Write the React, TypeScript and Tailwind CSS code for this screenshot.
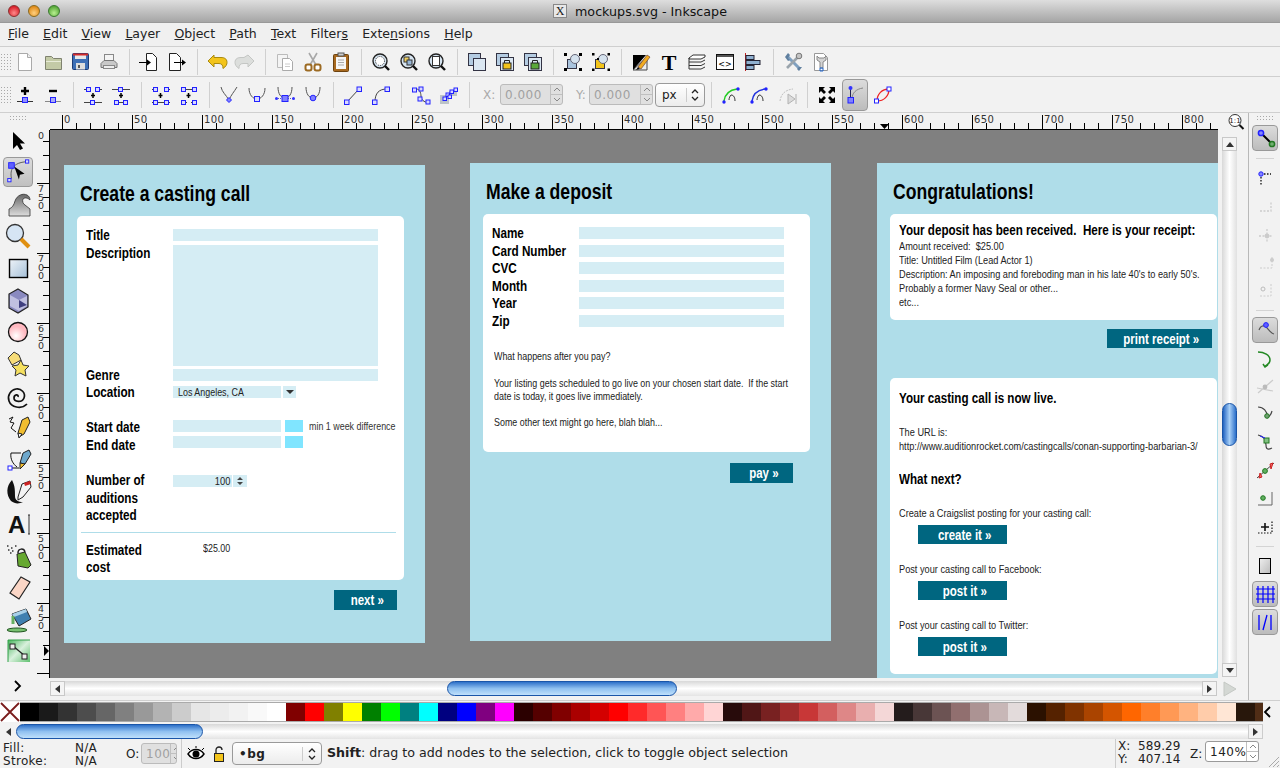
import type { ReactNode } from "react";

const N = "#2222ff";
const nodeBox = (x: number, y: number, s = 4, fill = "#d8d8ff") => (
  <rect x={x} y={y} width={s} height={s} fill={fill} stroke={N} strokeWidth="1" />
);

function Mag({ children }: { children?: ReactNode }) {
  return (
    <>
      <circle cx="11" cy="11" r="7" fill="#d6e4f0" stroke="#222" strokeWidth="1.4" />
      {children}
      <path d="M16 16l4 4" stroke="#111" strokeWidth="2.4" />
    </>
  );
}

const icons: Record<string, ReactNode> = {
  new: <><path d="M5.5 3.5h9l4 4v13h-13z" fill="#fff" stroke="#aaa" /><path d="M14.5 3.5v4h4" fill="#eee" stroke="#aaa" /></>,
  open: <><path d="M4.5 6.5h6l2 2h8v11h-16z" fill="#c3caa6" stroke="#7f826f" /><path d="M5 11.5h15" stroke="#e8ecd8" /></>,
  save: <><rect x="3.5" y="3.5" width="16" height="16" rx="1" fill="#3d6fb6" stroke="#1c3b75" /><rect x="6" y="4" width="11" height="5" fill="#e8e8e8" /><rect x="4" y="3.5" width="15" height="2" fill="#d42a2a" /><rect x="7" y="13" width="9" height="6.5" fill="#ddd" /><rect x="9" y="15" width="2" height="3" fill="#555" /></>,
  print: <><rect x="7.5" y="4.5" width="9" height="6" fill="#f4f4f4" stroke="#888" /><path d="M7 10.5h10l3 3v4H4v-4z" fill="#c9c9c9" stroke="#777" /><rect x="6.5" y="15.5" width="11" height="3" fill="#eee" stroke="#888" /></>,
  import: <><path d="M9.5 3.5h6l4 4v13h-10z" fill="#fff" stroke="#222" /><path d="M2 12.5h11" stroke="#000" /><path d="M10 9.5l4 3-4 3z" fill="#000" /></>,
  export: <><path d="M4.5 3.5h7l4 4v13h-11z" fill="#fff" stroke="#222" /><path d="M9 12.5h11" stroke="#000" /><path d="M17 9.5l4 3-4 3z" fill="#000" /></>,
  undo: <path d="M9 5l-6 6 6 6v-3.500h5c3 0 4 2 4 5 3-2 4-4 4-6 0-4-3-5-6-5H9z" fill="#f3c41a" stroke="#a98a10" />,
  redo: <path d="M15 5l6 6-6 6v-3.500h-5c-3 0-4 2-4 5-3-2-4-4-4-6 0-4 3-5 6-5h3z" fill="#dcdedc" stroke="#c4c6c4" />,
  copy: <><path d="M4.500 4.500h10v13h-10z" fill="#f4f4f4" stroke="#bbb" /><path d="M9.500 8.500h7l3 3v9h-10z" fill="#fff" stroke="#aaa" /><path d="M12 14h5M12 16.500h5" stroke="#ccc" /></>,
  cut: <><path d="M8 3l7 12M16 3L9 15" stroke="#a8a8a8" strokeWidth="1.600" /><rect x="4.500" y="14.500" width="6" height="6" rx="2" fill="#fff" stroke="#9c6a22" strokeWidth="2" /><rect x="13.500" y="14.500" width="6" height="6" rx="2" fill="#fff" stroke="#9c6a22" strokeWidth="2" /></>,
  paste: <><rect x="4.500" y="4.500" width="15" height="17" rx="1" fill="#a8691f" stroke="#6d4310" /><rect x="7" y="7" width="10" height="12" fill="#f6f6f6" /><rect x="9" y="3" width="6" height="3" fill="#ccc" stroke="#555" /><path d="M9 10h6M9 12.500h6M9 15h6" stroke="#aaa" /></>,
  zoomsel: <Mag><circle cx="11" cy="11" r="4.500" fill="#fff" stroke="#333" strokeDasharray="1 1" /></Mag>,
  zoomdraw: <Mag><rect x="7" y="7" width="5" height="5" fill="#f0d060" stroke="#333" /><rect x="10" y="10" width="5" height="5" fill="#9ab8d8" stroke="#333" /></Mag>,
  zoompage: <Mag><rect x="7.500" y="6.500" width="7" height="9" fill="#fff" stroke="#333" /></Mag>,
  dup: <><rect x="3.500" y="3.500" width="12" height="12" fill="#b4cce2" stroke="#334" /><rect x="8.500" y="8.500" width="12" height="12" fill="#dbe7f2" stroke="#334" /></>,
  clone: <><rect x="3.500" y="3.500" width="12" height="12" fill="#b4cce2" stroke="#334" /><rect x="7.500" y="7.500" width="13" height="13" fill="#dbe7f2" stroke="#334" /><rect x="10" y="13" width="8" height="6" fill="#f3c41a" stroke="#222" /><path d="M11.500 13v-2.500h5V13" fill="none" stroke="#222" /></>,
  unlink: <><rect x="3.500" y="3.500" width="12" height="12" fill="#b4cce2" stroke="#334" /><rect x="7.500" y="7.500" width="13" height="13" fill="#dbe7f2" stroke="#334" /><rect x="10" y="13" width="8" height="6" fill="#5aa83a" stroke="#222" /><path d="M11.500 13v-2.500h5V13" fill="none" stroke="#222" /></>,
  group: <><rect x="6.500" y="9.500" width="9" height="9" fill="#a9c4de" stroke="#334" /><circle cx="14" cy="9" r="4.500" fill="#d5e2ee" stroke="#667" /><path d="M3 3h3v3H3zM18 3h3v3h-3zM3 18h3v3H3zM18 18h3v3h-3z" fill="#000" /></>,
  ungroup: <><rect x="6.500" y="9.500" width="9" height="9" fill="#f3c41a" stroke="#334" /><circle cx="14" cy="9" r="4.500" fill="#d5e2ee" stroke="#667" /><path d="M3 3h2.500v2.500H3zM18.500 3H21v2.500h-2.500zM3 18.500h2.500V21H3zM18.500 18.500H21V21h-2.500zM8 8h2v2H8z" fill="#000" /></>,
  fill: <><path d="M4 5h13L4 20z" fill="#000" /><path d="M4 20h14V7z" fill="#eee" stroke="#444" /><path d="M9 17l9-12 3 2-9 12z" fill="#f2ab20" stroke="#533" strokeWidth=".6" /><path d="M9 17l-2 3 4-1z" fill="#111" /></>,
  text: <text x="12" y="20" textAnchor="middle" fontSize="22" fontWeight="700" fontFamily="'Liberation Serif',serif" fill="#000">T</text>,
  layers: <path d="M4 8l4-3h12v2l-4 2H4zM4 12h12l4-2M4 15.500h12l4-2M4 19h12l4-2M4 8v11" fill="#fff" stroke="#333" />,
  xml: <><rect x="3.500" y="4.500" width="17" height="15" fill="#fff" stroke="#111" /><rect x="4" y="5" width="16" height="2" fill="#555" /><text x="12" y="16.500" textAnchor="middle" fontSize="8" fontFamily="'DejaVu Sans',sans-serif" fill="#000">{"<>"}</text></>,
  align: <><path d="M4.500 3v18" stroke="#c02020" /><rect x="5" y="5.500" width="8" height="4" fill="#8fb0d0" stroke="#223" /><rect x="5" y="10.500" width="14" height="4" fill="#8fb0d0" stroke="#223" /><rect x="5" y="15.500" width="8" height="4" fill="#8fb0d0" stroke="#223" /></>,
  prefs: <><path d="M6 6l12 12" stroke="#7fa0c0" strokeWidth="3" /><path d="M18 6L6 18" stroke="#9aa4ac" strokeWidth="2.600" /><path d="M4 7l3-4 2 2-2 3 2 2-2 1zM18 21l3-4-3 0-2 2z" fill="#5f7f9f" /><circle cx="18" cy="6" r="2.800" fill="#c4c4c4" stroke="#777" /></>,
  docprefs: <><path d="M5.500 3.500h9l4 4v13h-13z" fill="#fff" stroke="#999" /><path d="M8 6v4l3 2v6h3v-6l3-2V6l-2 2h-5z" fill="#d4d4d4" stroke="#888" /><path d="M11 18h3v3h-3z" fill="none" stroke="#2266cc" /></>,
  addnode: <><path d="M12 4v8M8 8h8" stroke="#000" strokeWidth="2.400" /><path d="M4 18.500h16" stroke="#333" />{nodeBox(9.500, 14.500, 5, "#9090ff")}</>,
  delnode: <><path d="M8 8h8" stroke="#000" strokeWidth="2.400" /><path d="M4 18.500h16" stroke="#888" />{nodeBox(9.500, 14.500, 5, "#aaaaf5")}</>,
  join: <><path d="M3 6.500h4M17 6.500h4M3 19.500h18" stroke="#444" />{nodeBox(5.500, 4.500)}{nodeBox(14.500, 4.500)}{nodeBox(9.500, 17.500)}<path d="M12 10v5M10 12.500h4" stroke="#000" strokeWidth="1.500" /></>,
  breaknode: <><path d="M3 6.500h18M5 19.500h14" stroke="#444" />{nodeBox(9.500, 4.500)}{nodeBox(5.500, 17.500)}{nodeBox(14.500, 17.500)}<path d="M12 10v5M10 12.500h4" stroke="#000" strokeWidth="1.500" /></>,
  joinseg: <><path d="M3 6.500h3M18 6.500h3M3 19.500h18" stroke="#444" />{nodeBox(4.500, 4.500)}{nodeBox(15.500, 4.500)}{nodeBox(4.500, 17.500)}{nodeBox(15.500, 17.500)}<path d="M11.500 10v5M9.500 12.500h4" stroke="#000" strokeWidth="1.500" /></>,
  delseg: <><path d="M4 6.500h16M4 19.500h6M14 19.500h6" stroke="#444" />{nodeBox(4.500, 4.500)}{nodeBox(15.500, 4.500)}{nodeBox(4.500, 17.500)}{nodeBox(15.500, 17.500)}<path d="M11.500 10v5M9.500 12.500h4" stroke="#000" strokeWidth="1.500" /></>,
  cusp: <><path d="M4 4c1 5 5 8 8 13 2-5 5-8 8-13" fill="none" stroke="#555" /><path d="M9.500 17l2.500-2.500 2.500 2.500-2.500 2.500z" fill="#8080ff" stroke={N} /></>,
  smooth: <><path d="M4 5c0 7 4 11 8 11s8-4 8-11" fill="none" stroke="#555" />{nodeBox(9.500, 13.500, 5)}</>,
  sym: <><path d="M5 4c0 7 3 11 7 11s7-4 7-11" fill="none" stroke="#555" /><path d="M3 15.500h18" stroke="#55c" strokeDasharray="1 1" />{nodeBox(9, 12.500, 6, "#8080ff")}<circle cx="3.500" cy="15.500" r="1.500" fill="#33f" /><circle cx="20.500" cy="15.500" r="1.500" fill="#33f" /></>,
  auto: <><path d="M5 4c0 7 3 11 7 11s7-4 7-11" fill="none" stroke="#555" /><circle cx="12" cy="15" r="2.800" fill="#8080ff" stroke={N} /></>,
  toline: <><path d="M6 19L18 6" stroke="#444" />{nodeBox(3.500, 17, 4.500)}{nodeBox(16, 4, 4.500)}</>,
  tocurve: <><path d="M6 19c0-9 4-13 12-13" fill="none" stroke="#444" />{nodeBox(3.500, 17, 4.500)}{nodeBox(16, 4, 4.500)}</>,
  objpath: <><path d="M6 7c4-3 6 3 6 6s3 7 7 6" fill="none" stroke="#444" />{nodeBox(3.500, 5, 4)}{nodeBox(10, 4, 4)}{nodeBox(9, 14, 4)}{nodeBox(17, 17, 4)}</>,
  strokepath: <><path d="M3 12h9v9H3zM12 8h8v5h-8z" fill="#bcc3c8" />{nodeBox(6, 14, 3.500)}{nodeBox(9, 10, 3.500)}{nodeBox(13, 7, 3.500)}{nodeBox(17, 5, 3.500)}{nodeBox(11, 12, 3.500)}</>,
  nextobj: <><path d="M5 18c1-7 5-11 13-12" fill="none" stroke="#22cc22" strokeWidth="1.500" /><circle cx="5" cy="19" r="1.700" fill={N} /><circle cx="19" cy="6" r="1.700" fill={N} /><path d="M12 12c3 0 4 3 4 6M12 12c-1 1-2 3-2 5" fill="none" stroke="#333" /></>,
  prevobj: <><path d="M5 18c1-7 5-11 13-12" fill="none" stroke="#2233dd" strokeWidth="1.500" /><circle cx="5" cy="19" r="1.700" fill={N} /><circle cx="19" cy="6" r="1.700" fill={N} /><path d="M12 12c3 0 4 3 4 6M12 12c-1 1-2 3-2 5" fill="none" stroke="#333" /></>,
  lpe: <g opacity=".4"><path d="M5 18c1-7 5-11 13-12" fill="none" stroke="#777" strokeDasharray="2 1" /><path d="M13 11l7 5-7 5z" fill="#bbb" stroke="#555" /><path d="M21 11v10" stroke="#555" /></g>,
  transform: <path d="M4 4h6L8 6l3 3-2 2-3-3-2 2zM20 4v6l-2-2-3 3-2-2 3-3-2-2zM4 20v-6l2 2 3-3 2 2-3 3 2 2zM20 20h-6l2-2-3-3 2-2 3 3 2-2z" fill="#000" />,
  handles: <><path d="M9 16C9 10 13 6 20 5" fill="none" stroke="#888" /><path d="M7.500 5v11" stroke="#225" />{nodeBox(5, 14.500, 5.500, "#8080ff")}<circle cx="7.500" cy="5" r="2" fill="#33f" /></>,
  outline: <><path d="M6 18C6 11 11 6 18 6 18 13 13 18 6 18z" fill="none" stroke="#ee2222" strokeWidth="1.300" />{nodeBox(3.500, 16, 4, "#fff")}{nodeBox(16, 4, 4, "#fff")}</>,
  selector: <path d="M10 7v17l4-4 3 5 3-1.500-3-5h5z" fill="#000" />,
  node: <><path d="M8 22C6 12 10 5 24 4" fill="none" stroke="#555" />{nodeBox(5, 5, 6, "#6060ff")}{nodeBox(23, 2, 3.500)}{nodeBox(4, 22, 3.500)}<path d="M11 9l11 8-5 1-1 5z" fill="#000" /></>,
  tweak: <><defs><linearGradient id="twg" x1="0" y1="0" x2="0" y2="1"><stop offset="0" stopColor="#666" /><stop offset="1" stopColor="#ddd" /></linearGradient></defs><path d="M6 27V20c3-1 5-4 6-8 2-6 8-8 12-6 2 1 3 3 3 5-2-2-5-3-7-1-1 2 0 5 2 6l5 4v7z" fill="url(#twg)" stroke="#333" strokeWidth=".8" /></>,
  zoom: <><circle cx="12" cy="12" r="8.500" fill="#d6e5f4" stroke="#333" strokeWidth="1.300" /><path d="M18 18l8 8" stroke="#e09010" strokeWidth="4" /></>,
  rect: <><defs><linearGradient id="rectg" x1="0" y1="0" x2="1" y2="1"><stop offset="0" stopColor="#eef3f8" /><stop offset="1" stopColor="#a5c0d8" /></linearGradient></defs><rect x="6.500" y="6.500" width="18" height="18" fill="url(#rectg)" stroke="#000" strokeWidth="1.400" /></>,
  box3d: <><path d="M15 4l10 6v12l-10 6-9-5V9z" fill="#8a8ac0" stroke="#222" strokeWidth="1.200" /><path d="M7 10l9 5 8-4v10l-8 5-9-5z" fill="#c0c0e0" /><path d="M16 15v8l8-3z" fill="#3f3f80" /></>,
  circle: <><defs><radialGradient id="circg" cx=".4" cy=".7"><stop offset="0" stopColor="#ffffff" /><stop offset="1" stopColor="#ffb8c0" /></radialGradient></defs><circle cx="15" cy="15" r="9.500" fill="url(#circg)" stroke="#111" strokeWidth="1.300" /></>,
  star: <><path d="M11 3l5 3 2 5-9 5-4-7z" fill="#f6dc78" stroke="#333" /><path d="M18 11l2 5 6 1-4 4 1 6-6-3-5 3 1-6-4-4 6-1z" fill="#f5e060" stroke="#333" /></>,
  spiral: <path d="M15 16c1-3-4-3-4 1s8 5 10 0-3-10-8-9-9 6-7 12 12 9 18 3" fill="none" stroke="#111" strokeWidth="1.700" />,
  pencil: <><path d="M6 6l4-2-3 5 4 1-3 5 5 4" fill="none" stroke="#111" /><path d="M15 20l4-13 6-3 2 5-6 12-5 3z" fill="#f0bd30" stroke="#222" /><path d="M15 20l4 1-3 4z" fill="#fff" stroke="#222" /></>,
  pen: <><path d="M8 8h10M8 8c-1 6 2 11 6 14M7 23h9" fill="none" stroke="#111" />{nodeBox(5, 21, 4, "#fff")}<path d="M17 18l3-10 6-3 2 4-6 10z" fill="#6ea8cc" stroke="#222" /><path d="M17 18l5 1-5 5z" fill="#f0bd30" stroke="#222" /></>,
  calligraphy: <><path d="M9 3C3 9 3 18 8 24c4 3 8 3 12 1-5 0-8-2-8-6 0-6 0-10-3-16z" fill="#111" /><path d="M15 20l4-13 8-3 1 6-8 10-5 3z" fill="#f4f4f4" stroke="#222" /><path d="M21 6l6-2 1 3-6 2z" fill="#cc2222" /></>,
  texttool: <><text x="5" y="24" fontSize="24" fontWeight="700" fontFamily="'Liberation Sans',sans-serif" fill="#111">A</text><path d="M25 6h2M25 25h2M26 6v19" stroke="#333" /></>,
  spray: <><path d="M4 5h2M8 7h2M5 9h2M9 10h2M12 5h2M7 12h2" stroke="#333" strokeWidth="1.400" strokeDasharray="1.500 1" /><path d="M14 13l8-2 6 13-3 3-10-2z" fill="#66a830" stroke="#222" /><path d="M15 12c0-5 6-5 7-1" fill="none" stroke="#222" strokeWidth="1.500" /></>,
  eraser: <path d="M7 20L18 4l9 5-11 17z" fill="#fbd6c6" stroke="#222" strokeWidth="1.200" />,
  bucket: <><path d="M9 9l14-5 5 10-12 7z" fill="#3f80b0" stroke="#222" /><path d="M9 9l14-5 1 3-13 5z" fill="#a8d0e8" /><path d="M10 11v8" stroke="#66b060" strokeWidth="3" /><ellipse cx="14" cy="25" rx="10" ry="2" fill="#78c070" stroke="#225522" /></>,
  connector: <><defs><linearGradient id="cng" x1="0" y1="0" x2="1" y2="1"><stop offset="0" stopColor="#45b45a" /><stop offset=".5" stopColor="#d8f0dc" /><stop offset="1" stopColor="#60c070" /></linearGradient></defs><rect x="5" y="3" width="22" height="22" fill="url(#cng)" /><path d="M5 25V3h22" fill="none" stroke="#30a048" /><path d="M10 9l12 10" stroke="#222" strokeWidth="1.300" /><rect x="7" y="7" width="5" height="5" fill="#eee" stroke="#222" /><rect x="19" y="17" width="5" height="5" fill="#eee" stroke="#222" /></>,
  snap: <><path d="M10 9l8 8" stroke="#000" strokeWidth="2" /><circle cx="8" cy="7" r="2.600" fill="#8888ff" stroke={N} strokeWidth="1.500" /><circle cx="19" cy="18" r="2.600" fill="#70b070" stroke="#227722" strokeWidth="1.500" /></>,
  snapbbox: <><path d="M8 8h10M8 8v11" stroke="#111" strokeDasharray="1.500 1.500" strokeWidth="1.300" /><circle cx="8" cy="8" r="2.200" fill="#8888ff" stroke={N} /></>,
  bb1: <path d="M7 17h11V7" fill="none" stroke="#ccc" strokeWidth="1.300" strokeDasharray="2 1.500" />,
  bb2: <><path d="M6 14h13M14 7v13" stroke="#ccc" strokeWidth="1.300" strokeDasharray="2 1.500" /><circle cx="14" cy="14" r="2.400" fill="#ccc" /></>,
  bb3: <><path d="M7 18h12V6" fill="none" stroke="#ccc" strokeDasharray="2 1.500" /><circle cx="19" cy="10" r="2" fill="#ccc" /></>,
  bb4: <><path d="M7 18h11V6" fill="none" stroke="#ccc" strokeDasharray="2 1.500" /><circle cx="10" cy="11" r="2" fill="none" stroke="#bbb" /></>,
  snapnode: <><path d="M6 12c2-5 4-4 6-4 3 2 5 7 9 8" fill="none" stroke="#555" strokeWidth="1.200" /><circle cx="13" cy="7" r="2.400" fill="#6060ff" stroke={N} /></>,
  snappath: <><path d="M5 6c6 0 12 3 12 8s-4 4-5 7" fill="none" stroke="#228822" strokeWidth="1.500" /><path d="M10 18l2 3 3-2" fill="none" stroke="#228822" strokeWidth="1.500" /></>,
  snapint: <><path d="M5 19L20 6M4 14l16 3" stroke="#ccc" strokeWidth="1.200" /><circle cx="12" cy="13" r="2.400" fill="#bbb" /></>,
  snapcusp: <><path d="M5 5c5 0 10 4 9 11M14 16c2-1 4-3 5-7" fill="none" stroke="#444" strokeWidth="1.200" /><circle cx="14" cy="14" r="2.300" fill="#70a070" stroke="#227722" /></>,
  snapsmooth: <><path d="M5 5c5 1 8 4 8 10s4 4 6 3" fill="none" stroke="#444" strokeWidth="1.200" /><rect x="11" y="8" width="5" height="5" fill="#80c080" stroke="#227722" /><path d="M7 6l5 2" stroke={N} /></>,
  snapmid: <><path d="M4 20L21 5" stroke="#444" /><path d="M7 15l-1 5 3-1zM17 6l1 5 2-6z" fill="#ee6666" stroke="#cc2222" /><circle cx="12" cy="13" r="2.400" fill="#60b060" stroke="#227722" /></>,
  snapcenter: <><path d="M5 19h14V6" fill="none" stroke="#666" /><circle cx="10" cy="12" r="2.300" fill="#60b060" stroke="#227722" /></>,
  snaprot: <><path d="M12 9v8M8 13h8" stroke="#111" strokeWidth="1.600" /><path d="M5 19h14V6" fill="none" stroke="#111" strokeDasharray="1.500 1.500" strokeWidth="1.200" /></>,
  snappage: <><defs><linearGradient id="pgg" x1="0" y1="0" x2="1" y2="1"><stop offset="0" stopColor="#eee" /><stop offset="1" stopColor="#bbb" /></linearGradient></defs><rect x="6.500" y="4.500" width="11" height="15" fill="url(#pgg)" stroke="#000" /></>,
  snapgrid: <path d="M5 4v17M10 4v17M15 4v17M20 4v17M3 7h19M3 12h19M3 17h19" stroke="#0000ff" strokeWidth="1.200" />,
  snapguide: <path d="M6 5v15M18 5v15M10 20l4-15" stroke="#0000ff" strokeWidth="1.300" />,
};

function Ic({ name, size = 24 }: { name: string; size?: number }) {
  const big = size === 30;
  return (
    <svg width={size} height={size} viewBox={big ? "0 0 30 30" : "0 0 24 24"} fill="none">
      {icons[name]}
    </svg>
  );
}

function Grip({ className }: { className: string }) {
  return <div className={`${className} bg-[radial-gradient(#a8a8a8_0.7px,transparent_0.8px)] bg-[length:3px_3px]`} />;
}

function Row({ items, active = [] }: { items: string[]; active?: string[] }) {
  return (
    <>
      {items.map((it, i) =>
        it === "|" ? (
          <div key={i} className="w-[12px] h-[26px] flex justify-center shrink-0">
            <div className="w-px bg-[#d0d0d0]" />
          </div>
        ) : (
          <div key={i} className="w-[28px] h-full flex items-center justify-center shrink-0">
            <div className={active.includes(it) ? "w-[26px] h-[32px] flex items-center justify-center rounded-[4px] border border-[#999] bg-gradient-to-b from-[#dcdcdc] to-[#bcbcbc]" : "contents"}>
              <Ic name={it} />
            </div>
          </div>
        )
      )}
    </>
  );
}

function Field({ value, disabled = true, w }: { value: string; disabled?: boolean; w: string }) {
  return (
    <div className={`${w} h-[21px] flex items-center justify-between rounded-[3px] border ${disabled ? "border-[#bbb] bg-[#e0e0e0] text-[#a0a0a0]" : "border-[#9a9a9a] bg-white text-[#222]"} text-[12px] tracking-[.5px] overflow-hidden`}>
      <span className="pl-[4px]">{value}</span>
      <div className="w-[12px] h-full shrink-0 flex flex-col border-l border-[#c0c0c0] text-[#888]">
        <div className="flex-1 flex items-center justify-center border-b border-[#c0c0c0]"><svg width="8" height="5"><path d="M1 4l3-3 3 3" fill="none" stroke="currentColor" /></svg></div>
        <div className="flex-1 flex items-center justify-center"><svg width="8" height="5"><path d="M1 1l3 3 3-3" fill="none" stroke="currentColor" /></svg></div>
      </div>
    </div>
  );
}

function UpDown() {
  return (
    <svg width="10" height="14" className="text-[#222]"><path d="M2 5l3-3 3 3M2 9l3 3 3-3" fill="none" stroke="currentColor" strokeWidth="1.300" /></svg>
  );
}

function HRuler() {
  const majors = Array.from({ length: 17 }, (_, i) => i);
  const minors = Array.from({ length: 84 }, (_, i) => i * 14);
  return (
    <svg width="1168" height="17" className="block">
      {minors.map((x) => <path key={x} d={`M${x + 12 - 14 + 0.5} 10v6`} stroke="#000" />)}
      {majors.map((i) => (
        <g key={i}>
          <path d={`M${12 + i * 70 + 0.5} 2v14`} stroke="#000" />
          <text x={12 + i * 70 + 2} y="10" fontSize="10" letterSpacing=".4" fontFamily="'DejaVu Sans',sans-serif" fill="#333">{i * 50}</text>
        </g>
      ))}
      <path d="M0 16.500h1168" stroke="#000" />
      <path d="M830 11h9l-4.500 5z" fill="#000" />
    </svg>
  );
}

function VRuler() {
  const labels = [800, 750, 700, 650, 600, 550, 500, 450, 400];
  const minors = Array.from({ length: 40 }, (_, i) => i * 14);
  return (
    <svg width="14" height="548" className="block">
      {minors.map((y) => <path key={y} d={`M7 ${y + 11.500}h7`} stroke="#000" />)}
      {labels.map((v, i) => {
        const y = 53 + (i - 1) * 70;
        return (
          <g key={v}>
            <path d={`M1 ${y + 0.5}h13`} stroke="#000" />
            {String(v).split("").map((d, j) =>
              y + 9 + j * 8.5 < 8 || v === 400 ? null : (
                <text key={j} x="2" y={y + 9 + j * 8.500} fontSize="9.500" fontFamily="'DejaVu Sans',sans-serif" fill="#333">{d}</text>
              )
            )}
          </g>
        );
      })}
      <path d="M13.500 0v548" stroke="#000" />
      <path d="M8 516v10l5-5z" fill="#000" />
    </svg>
  );
}

const thumbV = "bg-gradient-to-r from-[#1f62c0] via-[#a7cff6] to-[#2a6fc9] border border-[#1a55a8] rounded-full";
const thumbH = "bg-gradient-to-b from-[#2c70c8] via-[#8fc0f0] to-[#bfe0fb] border border-[#1a55a8] rounded-full";
const troughH = "bg-gradient-to-b from-[#d8d8d8] via-white to-[#e4e4e4]";
const troughV = "bg-gradient-to-r from-[#d8d8d8] via-white to-[#e0e0e0]";

function HArrow({ dir }: { dir: "l" | "r" }) {
  return (
    <div className="w-[15px] h-full flex items-center justify-center bg-[#f4f4f4] border border-[#c8c8c8] shrink-0">
      <svg width="7" height="8"><path d={dir === "l" ? "M6 0v8L1 4z" : "M1 0v8l5-4z"} fill="#333" /></svg>
    </div>
  );
}

function VArrow({ dir }: { dir: "u" | "d" }) {
  return (
    <div className="h-[14px] flex items-center justify-center bg-[#f4f4f4] border border-[#c8c8c8] shrink-0">
      <svg width="8" height="7"><path d={dir === "u" ? "M0 6h8L4 1z" : "M0 1h8L4 6z"} fill="#333" /></svg>
    </div>
  );
}

// the mockup text is an Arial Narrow look: no narrow face is installed, so squeeze Liberation Sans
const mock = "font-['Liberation_Sans',sans-serif]";

function Page({ title, className, children }: { title: string; className: string; children: ReactNode }) {
  return (
    <div className={`absolute bg-[#afdde9] ${mock} ${className}`}>
      <div className="pl-[16px] pt-[15px] h-[51px] text-[22px] leading-[28px] font-bold text-black">
        <span className="inline-block origin-left scale-x-[.8] whitespace-nowrap">{title}</span>
      </div>
      {children}
    </div>
  );
}

function Card({ className, children }: { className: string; children: ReactNode }) {
  return <div className={`ml-[13px] w-[327px] bg-white rounded-[5px] ${className}`}>{children}</div>;
}

function Cta({ label, className }: { label: string; className: string }) {
  return (
    <div className={`flex items-center justify-center pl-[4px] bg-[#006680] text-white font-bold text-[14px] leading-none ${className}`}>
      <span className="inline-block scale-x-[.82] whitespace-nowrap">{label}</span>
    </div>
  );
}

function Label({ children }: { children: ReactNode }) {
  return (
    <div className="w-[87px] shrink-0 font-bold text-[15px] leading-[17.500px] text-black">
      <span className="inline-block origin-left scale-x-[.78] whitespace-nowrap">{children}</span>
    </div>
  );
}

function Input({ className }: { className: string }) {
  return <div className={`bg-[#d5edf4] h-[12px] ${className}`} />;
}

const small = "text-[11.500px] leading-[14px] text-[#222] origin-left scale-x-[.775] whitespace-pre";
const wide = "text-[11.500px] leading-[14px] text-[#222] origin-left scale-x-[.8] whitespace-pre";
const heading = "font-bold text-[15px] leading-[18px] text-black origin-left scale-x-[.775] whitespace-pre";
const tiny = "inline-block origin-left scale-x-[.81] whitespace-nowrap";

const palette = [
  "bg-[#000000]", "bg-[#1a1a1a]", "bg-[#333333]", "bg-[#4d4d4d]", "bg-[#666666]", "bg-[#808080]", "bg-[#999999]", "bg-[#b3b3b3]", "bg-[#cccccc]", "bg-[#e6e6e6]", "bg-[#ececec]", "bg-[#f2f2f2]", "bg-[#f9f9f9]", "bg-[#ffffff]",
  "bg-[#800000]", "bg-[#ff0000]", "bg-[#808000]", "bg-[#ffff00]", "bg-[#008000]", "bg-[#00ff00]", "bg-[#008080]", "bg-[#00ffff]", "bg-[#000080]", "bg-[#0000ff]", "bg-[#800080]", "bg-[#ff00ff]",
  "bg-[#2b0000]", "bg-[#550000]", "bg-[#800000]", "bg-[#aa0000]", "bg-[#d40000]", "bg-[#ff0000]", "bg-[#ff2a2a]", "bg-[#ff5555]", "bg-[#ff8080]", "bg-[#ffaaaa]", "bg-[#ffd5d5]",
  "bg-[#280b0b]", "bg-[#501616]", "bg-[#782121]", "bg-[#a02c2c]", "bg-[#c83737]", "bg-[#d35f5f]", "bg-[#de8787]", "bg-[#e9afaf]", "bg-[#f4d7d7]",
  "bg-[#241c1c]", "bg-[#483737]", "bg-[#6c5353]", "bg-[#916f6f]", "bg-[#ac9393]", "bg-[#c8b7b7]", "bg-[#e3dbdb]",
  "bg-[#2b1100]", "bg-[#552200]", "bg-[#803300]", "bg-[#aa4400]", "bg-[#d45500]", "bg-[#ff6600]", "bg-[#ff7f2a]", "bg-[#ff9955]", "bg-[#ffb380]", "bg-[#ffccaa]", "bg-[#ffe6d5]",
  "bg-[#28170b]",
];

const menu: [string, string, string][] = [
  ["", "F", "ile"], ["", "E", "dit"], ["", "V", "iew"], ["", "L", "ayer"], ["", "O", "bject"], ["", "P", "ath"], ["", "T", "ext"], ["Filter", "s", ""], ["Exte", "n", "sions"], ["", "H", "elp"],
];

const top1 = ["new", "open", "save", "print", "|", "import", "export", "|", "undo", "redo", "|", "copy", "cut", "paste", "|", "zoomsel", "zoomdraw", "zoompage", "|", "dup", "clone", "unlink", "|", "group", "ungroup", "|", "fill", "text", "layers", "xml", "align", "|", "prefs", "docprefs"];
const top2a = ["addnode", "delnode", "|", "join", "breaknode", "|", "joinseg", "delseg", "|", "cusp", "smooth", "sym", "auto", "|", "toline", "tocurve", "|", "objpath", "strokepath", "|"];
const top2b = ["|", "nextobj", "prevobj", "lpe", "|", "transform", "handles", "outline"];
const tools = ["selector", "node", "tweak", "zoom", "rect", "box3d", "circle", "star", "spiral", "pencil", "pen", "calligraphy", "texttool", "spray", "eraser", "bucket", "connector"];
const snaps: (string | string[])[] = [["snap"], "|", ["snapbbox", "bb1", "bb2", "bb3", "bb4"], "|", ["snapnode", "snappath", "snapint", "snapcusp", "snapsmooth", "snapmid", "snapcenter", "snaprot"], "|", ["snappage", "snapgrid", "snapguide"]];
const snapActive = ["snap", "snapnode", "snapgrid", "snapguide"];

export default function App() {
  return (
    <div className="w-[1280px] h-[768px] flex flex-col overflow-hidden bg-[#f2f2f2] text-[#1a1a1a] font-['DejaVu_Sans',sans-serif]">
      {/* Title bar */}
      <div className="relative h-[23px] shrink-0 flex items-center justify-center gap-[8px] bg-gradient-to-b from-[#dedede] to-[#a6a6a6] border-b border-[#999]">
        <div className="absolute left-[8px] top-[5px] flex gap-[8px]">
          <div className="w-[12px] h-[12px] rounded-full border border-[#8a3030] bg-[radial-gradient(circle_at_50%_70%,#ff8a8a,#d81f2a_75%)]" />
          <div className="w-[12px] h-[12px] rounded-full border border-[#8a6a20] bg-[radial-gradient(circle_at_50%_70%,#ffd080,#e08a18_75%)]" />
          <div className="w-[12px] h-[12px] rounded-full border border-[#3a7a30] bg-[radial-gradient(circle_at_50%_70%,#b8f090,#58a838_75%)]" />
        </div>
        <div className="w-[14px] h-[14px] flex items-center justify-center bg-[#e8e8e8] border border-[#888] text-[12px] leading-none font-['Liberation_Serif',serif]">X</div>
        <span className="text-[12.700px] text-[#111] pt-px">mockups.svg - Inkscape</span>
      </div>

      {/* Menu */}
      <div className="h-[24px] shrink-0 flex items-center pl-[8px] gap-[14.200px] border-b border-[#cfcfcf] bg-[#f0f0f0] text-[12.500px] text-[#222]">
        {menu.map(([a, u, b]) => (
          <span key={a + u + b}>{a}<span className="underline">{u}</span>{b}</span>
        ))}
      </div>

      {/* Commands bar */}
      <div className="h-[30px] shrink-0 flex items-center border-b border-[#cfcfcf]">
        <Grip className="w-[11px] h-[18px] shrink-0" />
        <Row items={top1} />
      </div>

      {/* Tool controls */}
      <div className="h-[36px] shrink-0 flex items-center border-b border-[#cfcfcf] text-[12px]">
        <Grip className="w-[11px] h-[18px] shrink-0" />
        <Row items={top2a} />
        <span className="w-[25px] pl-[8px] text-[#aaa] shrink-0">X:</span>
        <Field value="0.000" w="w-[63px]" />
        <span className="w-[26px] pl-[13px] text-[#aaa] shrink-0">Y:</span>
        <Field value="0.000" w="w-[64px]" />
        <div className="ml-[2px] w-[50px] h-[24px] shrink-0 flex items-center justify-between pl-[6px] pr-[4px] rounded-[4px] border border-[#9a9a9a] bg-gradient-to-b from-white to-[#ececec]">
          <span>px</span>
          <div className="pl-[3px] border-l border-[#ccc] flex"><UpDown /></div>
        </div>
        <Row items={top2b} active={["handles"]} />
      </div>

      {/* Middle */}
      <div className="h-[587px] shrink-0 flex">
        <div className="w-[36px] shrink-0 flex flex-col items-center">
          <Grip className="w-[18px] h-[6px] mt-[2px] mb-[3px]" />
          {tools.map((t) => (
            <div key={t} className="h-[32px] flex items-center justify-center">
              <div className={t === "node" ? "w-[30px] h-[30px] flex items-center justify-center rounded-[4px] border border-[#999] bg-gradient-to-b from-[#dcdcdc] to-[#c0c0c0]" : "contents"}>
                <Ic name={t} size={30} />
              </div>
            </div>
          ))}
          <svg width="12" height="14" className="mt-[11px]"><path d="M3 2l5 5-5 5" fill="none" stroke="#000" strokeWidth="1.800" /></svg>
        </div>

        <div className="w-[1212px] shrink-0 flex flex-col">
          <div className="h-[17px] flex">
            <div className="w-[14px] shrink-0" />
            <HRuler />
            <div className="w-[30px] flex items-center justify-center pl-[6px]">
              <svg width="18" height="17" viewBox="0 0 18 17"><circle cx="8" cy="7.500" r="6" fill="#fff" stroke="#333" /><text x="8" y="10" textAnchor="middle" fontSize="7" fill="#111" fontFamily="'DejaVu Sans',sans-serif">1:1</text><path d="M12.500 12l4 4" stroke="#111" strokeWidth="2" /></svg>
            </div>
          </div>

          <div className="h-[548px] flex">
            <VRuler />
            <div className="relative w-[1168px] h-[548px] bg-[#808080] overflow-hidden">
              <Page title="Create a casting call" className="left-[14px] top-[35px] w-[361px] h-[478px]">
                <Card className="h-[364px] pl-[9px] pt-[10px]">
                  <div className="flex h-[18px]"><Label>Title</Label><Input className="w-[205px] mt-[3px]" /></div>
                  <div className="flex h-[122px]"><Label>Description</Label><Input className="w-[205px] !h-[121px] mt-[1px]" /></div>
                  <div className="flex h-[17px]"><Label>Genre</Label><Input className="w-[205px] mt-[3px]" /></div>
                  <div className="flex h-[18px]">
                    <Label>Location</Label>
                    <div className="flex gap-[2px] mt-[3px]">
                      <div className="w-[108px] h-[12px] bg-[#d5edf4] pl-[5px] text-[11px] leading-[12px] text-[#222]"><span className={tiny}>Los Angeles, CA</span></div>
                      <div className="w-[13px] h-[12px] bg-[#d5edf4] flex items-center justify-center"><svg width="8" height="4"><path d="M0 0h8L4 4z" fill="#333" /></svg></div>
                    </div>
                  </div>
                  <div className="flex h-[18px] mt-[17px]">
                    <Label>Start date</Label>
                    <div className="flex gap-[4px] mt-[2px]">
                      <Input className="w-[108px] shrink-0" />
                      <div className="w-[18px] h-[12px] bg-[#80e5ff] shrink-0" />
                      <span className="ml-[2px] w-[88px] shrink-0 text-[11px] leading-[12px] text-[#333]"><span className={tiny}>min 1 week difference</span></span>
                    </div>
                  </div>
                  <div className="flex h-[18px]">
                    <Label>End date</Label>
                    <div className="flex gap-[4px]"><Input className="w-[108px]" /><div className="w-[18px] h-[12px] bg-[#80e5ff]" /></div>
                  </div>
                  <div className="flex mt-[17px]">
                    <Label>Number of<br />auditions<br />accepted</Label>
                    <div className="flex gap-px mt-[4px] h-[12px]">
                      <div className="w-[59px] h-[12px] bg-[#d5edf4] pr-[2px] text-right text-[11px] leading-[12px] text-[#222]"><span className="inline-block origin-right scale-x-[.85]">100</span></div>
                      <div className="w-[14px] h-[12px] bg-[#d5edf4] flex items-center justify-center"><svg width="8" height="10"><path d="M1 4l3-3 3 3zM1 6l3 3 3-3z" fill="#444" /></svg></div>
                    </div>
                  </div>
                  <div className="h-px w-[315px] -ml-[5px] mt-[8px] bg-[#afdde9]" />
                  <div className="flex mt-[8px]">
                    <Label>Estimated<br />cost</Label>
                    <span className="ml-[30px] text-[11px] leading-[14px] text-[#222]"><span className={tiny}>$25.00</span></span>
                  </div>
                </Card>
                <Cta label="next »" className="ml-[270px] mt-[10px] w-[63px] h-[20px]" />
              </Page>

              <Page title="Make a deposit" className="left-[420px] top-[33px] w-[361px] h-[478px]">
                <Card className="h-[238px] pl-[9px] pt-[10px]">
                  {["Name", "Card Number", "CVC", "Month", "Year", "Zip"].map((l) => (
                    <div key={l} className="flex h-[17.500px]"><Label>{l}</Label><Input className="w-[205px] mt-[3px]" /></div>
                  ))}
                  <div className={`${small} ml-[2px] mt-[20px]`}>What happens after you pay?</div>
                  <div className={`${small} ml-[2px] mt-[14px] !leading-[13px]`}>Your listing gets scheduled to go live on your chosen start date.  If the start{"\n"}date is today, it goes live immediately.</div>
                  <div className={`${small} ml-[2px] mt-[12px]`}>Some other text might go here, blah blah...</div>
                </Card>
                <Cta label="pay »" className="ml-[260px] mt-[11px] w-[63px] h-[20px]" />
              </Page>

              <Page title="Congratulations!" className="left-[827px] top-[33px] w-[341px] h-[520px]">
                <Card className="h-[106px] pl-[9px] pt-[7px]">
                  <div className={heading}>Your deposit has been received.  Here is your receipt:</div>
                  <div className={wide}>Amount received:  $25.00{"\n"}Title: Untitled Film (Lead Actor 1){"\n"}Description: An imposing and foreboding man in his late 40's to early 50's.{"\n"}Probably a former Navy Seal or other...{"\n"}etc...</div>
                </Card>
                <Cta label="print receipt »" className="ml-[230px] mt-[9px] w-[105px] h-[19px]" />
                <Card className="h-[296px] mt-[30px] pl-[9px] pt-[11px]">
                  <div className={heading}>Your casting call is now live.</div>
                  <div className={`${wide} mt-[18px]`}>The URL is:{"\n"}http://www.auditionrocket.com/castingcalls/conan-supporting-barbarian-3/</div>
                  <div className={`${heading} mt-[17px]`}>What next?</div>
                  <div className={`${wide} mt-[18px]`}>Create a Craigslist posting for your casting call:</div>
                  <Cta label="create it »" className="ml-[19px] mt-[5px] w-[89px] h-[19px]" />
                  <div className={`${wide} mt-[18px]`}>Post your casting call to Facebook:</div>
                  <Cta label="post it »" className="ml-[19px] mt-[5px] w-[89px] h-[19px]" />
                  <div className={`${wide} mt-[18px]`}>Post your casting call to Twitter:</div>
                  <Cta label="post it »" className="ml-[19px] mt-[5px] w-[89px] h-[19px]" />
                </Card>
              </Page>
            </div>
            <div className="w-[30px] pl-[4px] pt-[7px] pb-px flex">
              <div className="w-[15px] flex flex-col">
                <VArrow dir="u" />
                <div className={`flex-1 flex flex-col ${troughV}`}>
                  <div className="h-[252px]" />
                  <div className={`h-[43px] ${thumbV}`} />
                </div>
                <VArrow dir="d" />
              </div>
            </div>
          </div>

          <div className="h-[15px] mt-[3px] flex">
            <div className="w-[14px] shrink-0" />
            <HArrow dir="l" />
            <div className={`w-[1137px] flex ${troughH}`}>
              <div className="w-[382px]" />
              <div className={`w-[230px] ${thumbH}`} />
            </div>
            <HArrow dir="r" />
            <div className="w-[30px] flex items-center pl-[5px]">
              <svg width="16" height="16"><path d="M2 1l12 7-12 7z" fill="#d4d8d4" stroke="#c4c8c4" /></svg>
            </div>
          </div>
        </div>

        <div className="w-[32px] shrink-0 flex flex-col items-center border-l border-[#b8b8b8] pl-px">
          <Grip className="w-[18px] h-[6px] mt-[2px] mb-[3px]" />
          {snaps.map((g, i) =>
            g === "|" ? (
              <div key={i} className="h-[12px] w-[18px] flex items-center"><div className="h-px w-full bg-[#d4d4d4]" /></div>
            ) : (
              (g as string[]).map((s) => (
                <div key={s} className="h-[28px] flex items-center justify-center">
                  <div className={snapActive.includes(s) ? "w-[26px] h-[26px] flex items-center justify-center rounded-[4px] border border-[#999] bg-gradient-to-b from-[#dcdcdc] to-[#bcbcbc]" : "contents"}>
                    <Ic name={s} />
                  </div>
                </div>
              ))
            )
          )}
        </div>
      </div>

      {/* Palette */}
      <div className="h-[24px] shrink-0 flex items-start pt-px border-t border-[#cfcfcf]">
        <div className="flex h-[20px] border-y border-[#aaa]">
          <svg width="20" height="20" className="shrink-0 -mt-px"><rect width="20" height="20" fill="#fff" /><path d="M1 1l18 18M19 1L1 19" stroke="#7a1c1c" strokeWidth="1.800" /></svg>
          {palette.map((c, i) => <div key={i} className={`w-[19px] h-full shrink-0 ${c}`} />)}
          <div className="w-[8px] h-full bg-[#502d16] shrink-0" />
        </div>
        <svg width="12" height="14" className="ml-[-1px] mt-[3px]"><path d="M8 2L3 7l5 5" fill="none" stroke="#000" strokeWidth="1.800" /></svg>
      </div>

      {/* Palette scrollbar */}
      <div className="h-[15px] shrink-0 flex pr-[17px]">
        <div className="w-[16px] h-full flex items-center justify-center"><svg width="7" height="8"><path d="M6 0v8L1 4z" fill="#333" /></svg></div>
        <div className={`flex-1 ${troughH} rounded-l-full`}>
          <div className={`w-[187px] h-full ${thumbH}`} />
        </div>
        <div className="w-[15px] h-full flex items-center justify-center border border-[#ccc]"><svg width="7" height="8"><path d="M1 0v8l5-4z" fill="#333" /></svg></div>
      </div>

      {/* Status bar */}
      <div className="relative flex-1 flex items-center text-[12px] text-[#222]">
        <div className="w-[122px] pl-[3px] pt-[2px] flex flex-col leading-[13px] tracking-[.3px]">
          <div className="flex"><span className="w-[72px]">Fill:</span><span>N/A</span></div>
          <div className="flex"><span className="w-[72px]">Stroke:</span><span>N/A</span></div>
        </div>
        <span className="w-[19px] pl-[4px]">O:</span>
        <Field value="100" w="w-[36px]" />
        <div className="ml-[4px] w-px h-full bg-[#ccc]" />
        <div className="ml-[3px] w-[22px] flex justify-center">
          <svg width="18" height="16" viewBox="0 0 18 16"><path d="M1 8c4-6 12-6 16 0-4 6-12 6-16 0z" fill="#fff" stroke="#000" strokeWidth="1.400" /><circle cx="9" cy="8" r="3.500" fill="#000" /><path d="M3 4L1 2M9 2V0M15 4l2-2" stroke="#000" /></svg>
        </div>
        <div className="ml-[1px] w-[22px] flex justify-center">
          <svg width="14" height="18" viewBox="0 0 14 18"><rect x="2.500" y="8.500" width="9" height="8" fill="#f3c41a" stroke="#222" /><path d="M4 8V5c0-4 6-4 6 0" fill="none" stroke="#222" strokeWidth="1.300" /></svg>
        </div>
        <div className="ml-[2px] w-[90px] h-[23px] flex items-center justify-between pl-[6px] pr-[4px] rounded-[4px] border border-[#9a9a9a] bg-gradient-to-b from-white to-[#ececec]">
          <span className="font-bold tracking-[.5px]">•bg</span>
          <div className="pl-[4px] border-l border-[#ccc] flex"><UpDown /></div>
        </div>
        <span className="ml-[5px] text-[12.650px]"><b>Shift</b>: drag to add nodes to the selection, click to toggle object selection</span>
        <div className="absolute left-[1115px] top-0 bottom-0 w-px bg-[#ccc]" />
        <div className="absolute left-[1118px] top-[1px] leading-[13px] text-[12px] tracking-[.1px]">
          <div className="flex"><span className="w-[20px]">X:</span><span>589.29</span></div>
          <div className="flex"><span className="w-[20px]">Y:</span><span>407.14</span></div>
        </div>
        <span className="absolute left-[1190px] top-[6px] text-[12px]">Z:</span>
        <div className="absolute left-[1205px] top-[2px]"><Field value="140%" disabled={false} w="w-[54px]" /></div>
        <svg width="12" height="12" className="absolute right-0 bottom-0"><path d="M11 1L1 11M11 5l-6 6M11 9l-2 2" stroke="#aaa" /></svg>
      </div>
    </div>
  );
}
